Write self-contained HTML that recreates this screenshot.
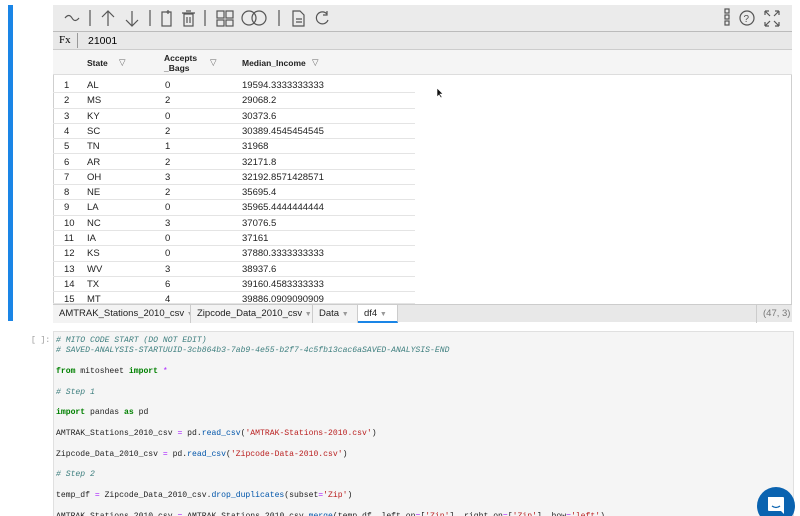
<!DOCTYPE html>
<html><head><style>
*{margin:0;padding:0;box-sizing:border-box}
html,body{width:800px;height:516px;overflow:hidden}
body{background:#fff;font-family:"Liberation Sans",sans-serif;position:relative}
.abs{position:absolute}
.bar{left:8px;top:5px;width:5px;height:316px;background:#1a85e6}
.panel{left:53px;top:5px;width:739px;height:317px;border:1px solid #cfcfcf;background:#fff}
.tb{left:53px;top:5px;width:739px;height:27px;background:#ebebeb;border-bottom:1px solid #bbb}
.fx{left:53px;top:32px;width:739px;height:18px;background:#e8e8e8;border-bottom:1px solid #ccc;font-size:11px}
.hdr{left:53px;top:50px;width:739px;height:25px;background:#f5f5f5;border-bottom:1px solid #ddd;font-size:8.5px;font-weight:bold;color:#222}
.row{position:absolute;left:53px;width:362px;height:15.3px;border-bottom:1px solid #e4e4e4;font-size:9.5px;color:#222}
.row span{position:absolute;top:2px}
.tabs{left:53px;top:304px;width:739px;height:18px;background:#e8e8e8;border-top:1px solid #ccc;font-size:9.5px;color:#222;white-space:nowrap}
.tab{position:absolute;top:0;height:18px;border-right:1px solid #ccc;padding:3px 0 0 6px;background:#f3f3f3;white-space:nowrap;overflow:hidden}
.code{left:53px;top:331px;width:741px;height:190px;background:#f5f5f5;border:1px solid #e0e0e0}
pre{position:absolute;left:56px;top:336px;font-family:"Liberation Mono",monospace;font-size:8.1px;line-height:10.35px;color:#222}
.c{color:#408080;font-style:italic}.k{color:#008000;font-weight:bold}.o{color:#aa22ff}.s{color:#ba2121}.f{color:#0055aa}
svg{position:absolute}
</style></head><body>
<div class="abs bar"></div>
<div class="abs panel"></div>
<div class="abs tb"></div>
<svg style="left:53px;top:5px" width="739" height="27" fill="none" stroke="#555" stroke-width="1.2">
<path d="M12 13 q4 -5 7 0 t7 0"/>
<path d="M37 5v16"/>
<path d="M55 21V7M49 12l6-6 6 6"/><path d="M79 6v14M73 15l6 6 6-6"/>
<path d="M97 5v16"/>
<rect x="109" y="7" width="9" height="14"/><path d="M115 5v4M113 7h4"/>
<rect x="131" y="9" width="9" height="12"/><path d="M129 8h13M133 6h5M134 12v6M137 12v6"/>
<path d="M152 5v16"/>
<rect x="164" y="6" width="7" height="7"/><rect x="173" y="6" width="7" height="7"/><rect x="164" y="15" width="7" height="6"/><rect x="173" y="15" width="7" height="6"/>
<circle cx="196" cy="13" r="7"/><circle cx="206" cy="13" r="7"/>
<path d="M226 5v16"/>
<path d="M240 6h7l4 4v11h-11z M243 14h6M243 17h6"/>
<path d="M274 9a6 6 0 1 0 1 6M274 6v4h-4"/>
<rect x="672" y="4" width="4" height="4"/><rect x="672" y="10" width="4" height="4"/><rect x="672" y="16" width="4" height="4"/>
<circle cx="694" cy="13" r="7"/><text x="690.5" y="17" font-size="10" fill="#555" stroke="none" font-family="Liberation Sans">?</text>
<path d="M712 6l5 5M712 6h4M712 6v4M726 6l-5 5M726 6h-4M726 6v4M712 21l5-5M712 21h4M712 21v-4M726 21l-5-5M726 21h-4M726 21v-4"/>
</svg>
<div class="abs fx"><span class="abs" style="left:6px;top:2px;font-family:'Liberation Serif',serif">Fx</span><span class="abs" style="left:24px;top:1px;width:1px;height:15px;background:#999"></span><span class="abs" style="left:35px;top:3px;font-size:10.5px">21001</span></div>
<div class="abs hdr">
<span class="abs" style="left:34px;top:8px">State</span><span class="abs" style="left:66px;top:7px;color:#666;font-weight:normal">▽</span>
<span class="abs" style="left:111px;top:3px;line-height:10px">Accepts<br>_Bags</span><span class="abs" style="left:157px;top:7px;color:#666;font-weight:normal">▽</span>
<span class="abs" style="left:189px;top:8px">Median_Income</span><span class="abs" style="left:259px;top:7px;color:#666;font-weight:normal">▽</span>
</div>
<div class="row" style="top:78px"><span style="left:11px">1</span><span style="left:34px">AL</span><span style="left:112px">0</span><span style="left:189px">19594.3333333333</span></div>
<div class="row" style="top:93.3px"><span style="left:11px">2</span><span style="left:34px">MS</span><span style="left:112px">2</span><span style="left:189px">29068.2</span></div>
<div class="row" style="top:108.6px"><span style="left:11px">3</span><span style="left:34px">KY</span><span style="left:112px">0</span><span style="left:189px">30373.6</span></div>
<div class="row" style="top:123.9px"><span style="left:11px">4</span><span style="left:34px">SC</span><span style="left:112px">2</span><span style="left:189px">30389.4545454545</span></div>
<div class="row" style="top:139.2px"><span style="left:11px">5</span><span style="left:34px">TN</span><span style="left:112px">1</span><span style="left:189px">31968</span></div>
<div class="row" style="top:154.5px"><span style="left:11px">6</span><span style="left:34px">AR</span><span style="left:112px">2</span><span style="left:189px">32171.8</span></div>
<div class="row" style="top:169.8px"><span style="left:11px">7</span><span style="left:34px">OH</span><span style="left:112px">3</span><span style="left:189px">32192.8571428571</span></div>
<div class="row" style="top:185.1px"><span style="left:11px">8</span><span style="left:34px">NE</span><span style="left:112px">2</span><span style="left:189px">35695.4</span></div>
<div class="row" style="top:200.4px"><span style="left:11px">9</span><span style="left:34px">LA</span><span style="left:112px">0</span><span style="left:189px">35965.4444444444</span></div>
<div class="row" style="top:215.7px"><span style="left:11px">10</span><span style="left:34px">NC</span><span style="left:112px">3</span><span style="left:189px">37076.5</span></div>
<div class="row" style="top:231px"><span style="left:11px">11</span><span style="left:34px">IA</span><span style="left:112px">0</span><span style="left:189px">37161</span></div>
<div class="row" style="top:246.3px"><span style="left:11px">12</span><span style="left:34px">KS</span><span style="left:112px">0</span><span style="left:189px">37880.3333333333</span></div>
<div class="row" style="top:261.6px"><span style="left:11px">13</span><span style="left:34px">WV</span><span style="left:112px">3</span><span style="left:189px">38937.6</span></div>
<div class="row" style="top:276.9px"><span style="left:11px">14</span><span style="left:34px">TX</span><span style="left:112px">6</span><span style="left:189px">39160.4583333333</span></div>
<div class="row" style="top:292.2px;height:12px;overflow:hidden"><span style="left:11px">15</span><span style="left:34px">MT</span><span style="left:112px">4</span><span style="left:189px">39886.0909090909</span></div>
<svg style="left:436px;top:87px" width="8" height="12"><path d="M1 1v9l2-2 2 3 1-1-2-3h3z" fill="#111" stroke="#fff" stroke-width=".6"/></svg>
<div class="abs tabs">
<div class="tab" style="left:0;width:138px">AMTRAK_Stations_2010_csv <span style="color:#999;font-size:7px">▼</span></div>
<div class="tab" style="left:138px;width:122px">Zipcode_Data_2010_csv <span style="color:#999;font-size:7px">▼</span></div>
<div class="tab" style="left:260px;width:45px">Data <span style="color:#999;font-size:7px">▼</span></div>
<div class="tab" style="left:305px;width:40px;background:#fff;border-bottom:2px solid #1a85e6">df4 <span style="color:#999;font-size:7px">▼</span></div>
<div class="abs" style="left:703px;top:0;height:18px;border-left:1px solid #ccc;padding:3px 0 0 6px;color:#777">(47, 3)</div>
</div>
<div class="abs" style="left:31px;top:336px;font-family:'Liberation Mono',monospace;font-size:8px;color:#999">[ ]:</div>
<div class="abs code"></div>
<pre><span class="c"># MITO CODE START (DO NOT EDIT)</span>
<span class="c"># SAVED-ANALYSIS-STARTUUID-3cb864b3-7ab9-4e55-b2f7-4c5fb13cac6aSAVED-ANALYSIS-END</span>

<span class="k">from</span> mitosheet <span class="k">import</span> <span class="o">*</span>

<span class="c"># Step 1</span>

<span class="k">import</span> pandas <span class="k">as</span> pd

AMTRAK_Stations_2010_csv <span class="o">=</span> pd.<span class="f">read_csv</span>(<span class="s">'AMTRAK-Stations-2010.csv'</span>)

Zipcode_Data_2010_csv <span class="o">=</span> pd.<span class="f">read_csv</span>(<span class="s">'Zipcode-Data-2010.csv'</span>)

<span class="c"># Step 2</span>

temp_df <span class="o">=</span> Zipcode_Data_2010_csv.<span class="f">drop_duplicates</span>(subset<span class="o">=</span><span class="s">'Zip'</span>)

AMTRAK_Stations_2010_csv <span class="o">=</span> AMTRAK_Stations_2010_csv.<span class="f">merge</span>(temp_df, left_on<span class="o">=</span>[<span class="s">'Zip'</span>], right_on<span class="o">=</span>[<span class="s">'Zip'</span>], how<span class="o">=</span><span class="s">'left'</span>)</pre>
<div class="abs" style="left:757px;top:487px;width:38px;height:38px;border-radius:50%;background:#0a63b0"></div>
<svg style="left:765px;top:494px" width="22" height="22"><path d="M3 3h15a1 1 0 0 1 1 1v16l-3-3H4a1 1 0 0 1-1-1z" fill="#fff"/><path d="M7 12q4 3 8 0" stroke="#0a63b0" stroke-width="1.3" fill="none"/></svg>
</body></html>
